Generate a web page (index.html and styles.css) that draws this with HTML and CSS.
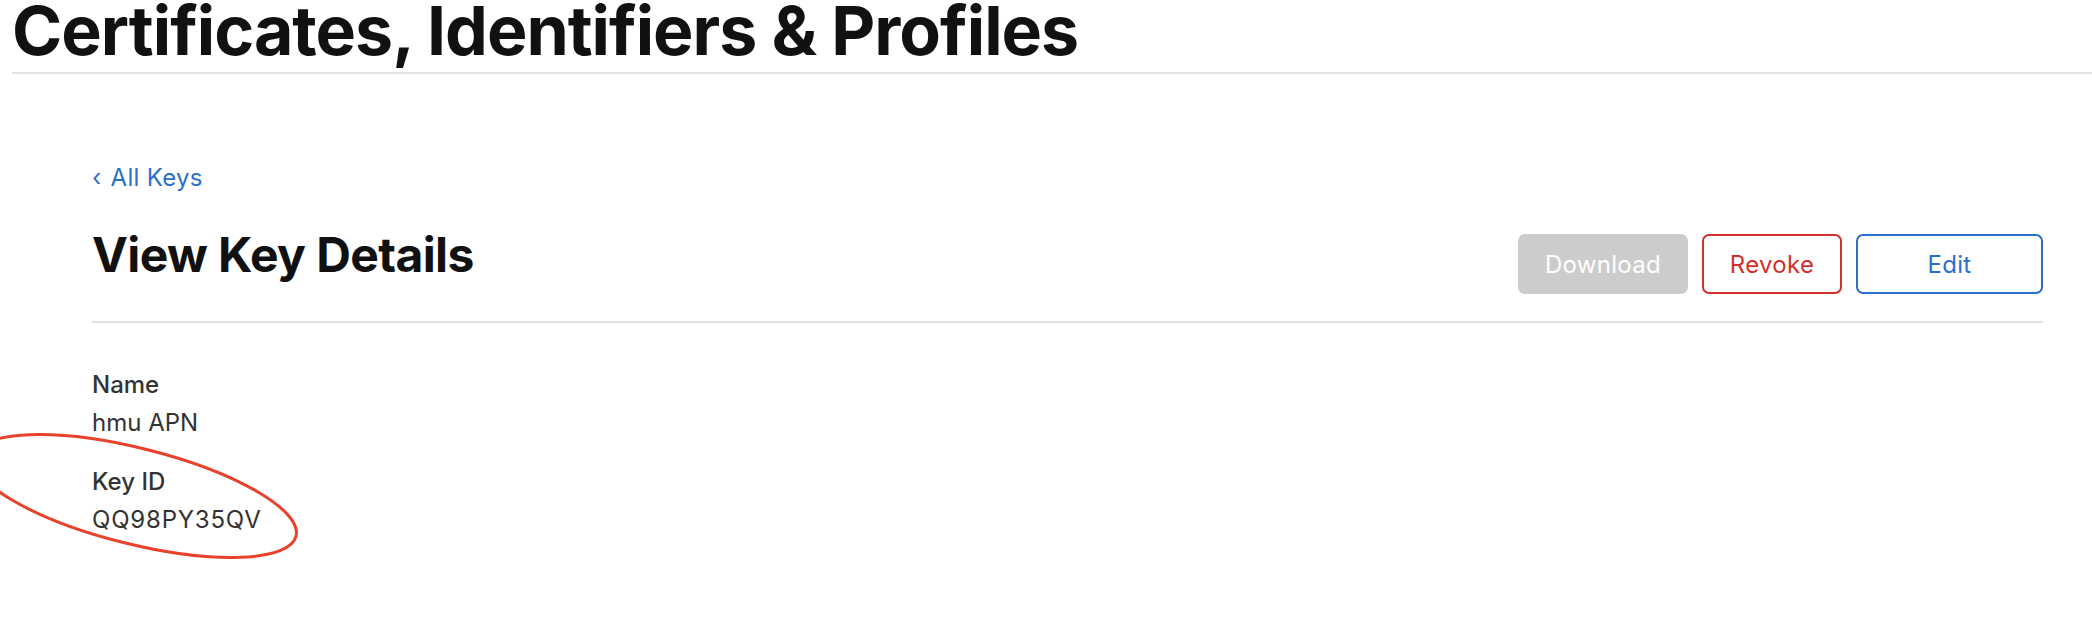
FILE: index.html
```html
<!DOCTYPE html>
<html lang="en">
<head>
    <meta charset="UTF-8">
    <meta name="viewport" content="width=device-width, initial-scale=1.0">
    <title>View Key Details</title>
    <link rel="stylesheet" href="styles.css">
</head>
<body>
    <header class="site-header">
        <h1>Certificates, Identifiers &amp; Profiles</h1>
    </header>

    <main class="content">
        <a class="back-link" href="#"><span class="chevron">&lsaquo;</span> All Keys</a>

        <div class="page-head">
            <h2>View Key Details</h2>
            <div class="actions">
                <button class="btn btn-download" disabled>Download</button>
                <button class="btn btn-revoke">Revoke</button>
                <button class="btn btn-edit">Edit</button>
            </div>
        </div>

        <div class="details">
            <div class="field">
                <div class="field-label">Name</div>
                <div class="field-value">hmu APN</div>
            </div>
            <div class="field">
                <div class="field-label">Key ID</div>
                <div class="field-value key-id">QQ98PY35QV</div>
            </div>
        </div>
    </main>

    <!-- hand drawn highlight round the key id -->
    <svg class="annotation" width="2092" height="620" viewBox="0 0 2092 620">
        <ellipse cx="135" cy="496" rx="166" ry="48" transform="rotate(14 135 496)" fill="none" stroke="#e8412c" stroke-width="3"/>
    </svg>
</body>
</html>
```

FILE: styles.css
```css
body {
    margin: 0;
    font-family: Inter, "Noto Sans", sans-serif;
    background: white;
    color: #333;
}
.site-header h1 {
    margin: 0 0 0 12px;
    padding-bottom: 12px;
    font-size: 68px;
    line-height: 60px;
    font-weight: 700;
    letter-spacing: -1px;
    color: #111;
    border-bottom: 2px solid #e3e3e3;
}
.content {
    padding: 89px 49px 0 92px;
}
.back-link {
    display: block;
    font-size: 24px;
    line-height: 30px;
    letter-spacing: 0.3px;
    color: #2b6fcb;
    text-decoration: none;
}
.chevron {
    margin-right: 2px;
}
.page-head {
    display: flex;
    justify-content: space-between;
    align-items: flex-start;
    margin-top: 33px;
    padding-bottom: 27px;
    border-bottom: 2px solid #e0e0e0;
}
.page-head h2 {
    margin: 0;
    font-size: 48px;
    line-height: 58px;
    font-weight: 700;
    letter-spacing: -0.6px;
    color: #111;
}
.actions {
    display: flex;
    gap: 14px;
    margin-top: 8px;
}
.btn {
    height: 60px;
    border-radius: 7px;
    border: 2px solid transparent;
    background: white;
    font-family: inherit;
    font-size: 24px;
    letter-spacing: 0.3px;
    cursor: pointer;
}
.btn-download {
    width: 170px;
    background: #cccccc;
    border-color: #cccccc;
    color: white;
}
.btn-revoke {
    width: 140px;
    border-color: #d32f2b;
    color: #d32f2b;
}
.btn-edit {
    width: 187px;
    border-color: #2b6fcb;
    color: #2b6fcb;
}
.details {
    display: flex;
    flex-direction: column;
    gap: 21px;
    margin-top: 43px;
}
.field {
    font-size: 24px;
    line-height: 38px;
}
.field-label {
    font-weight: 500;
}
.key-id {
    letter-spacing: 0.8px;
}
.annotation {
    position: absolute;
    left: 0;
    top: 0;
    pointer-events: none;
}
```
